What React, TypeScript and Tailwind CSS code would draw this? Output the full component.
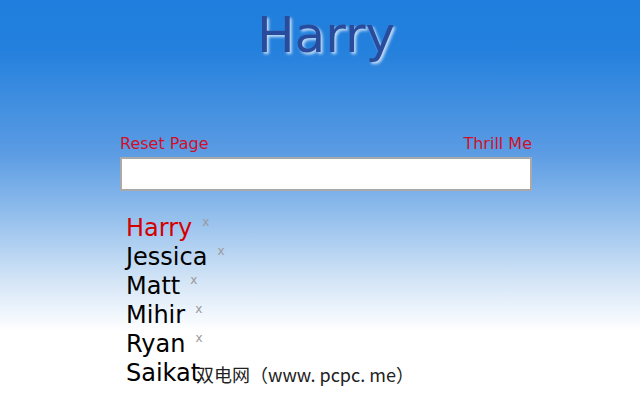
const names = ["Harry", "Jessica", "Matt", "Mihir", "Ryan", "Saikat"];

const App = () => {
  const selected = "Harry";

  return (
    <div className="relative w-[640px] h-[399px] overflow-hidden bg-[linear-gradient(to_bottom,#1f7edd_0%,#2380dd_12%,#5a9be3_38%,#8bbaeb_52%,#d2e4f6_70%,#ffffff_83%)] font-['DejaVu_Sans',Verdana,sans-serif]">
      <div className="ml-[120px] w-[412px]">
        <h1 className="mt-[10px] text-center text-[50px] leading-[50px] text-[#284b9c] [text-shadow:2px_2px_3px_rgba(255,255,255,0.75)]">
          {selected}
        </h1>

        <div className="mt-[74px] flex justify-between text-base leading-5 text-[#d0102a]">
          <span>Reset Page</span>
          <span>Thrill Me</span>
        </div>

        <input
          type="text"
          className="mt-[3px] block w-[412px] h-[34px] bg-white border-2 border-[#a9a9a9] outline-none"
        />

        <ul className="mt-[23px] pl-[6px]">
          {names.map((name) => (
            <li key={name} className="h-[29px] text-[24px] leading-[29px] whitespace-nowrap">
              <span className={name === selected ? "text-[#d40000]" : "text-black"}>{name}</span>
              {name !== "Saikat" && (
                <span className="relative -top-[10px] ml-[10px] text-[12px] leading-none text-[#9a9a9a]">x</span>
              )}
            </li>
          ))}
        </ul>
      </div>

      <div className="absolute left-[196px] top-[362px] text-[18px] leading-[24px] text-[#222] font-['Noto_Sans_CJK_SC',sans-serif]">
        双电网（www. pcpc. me）
      </div>
    </div>
  );
};

export default App;
